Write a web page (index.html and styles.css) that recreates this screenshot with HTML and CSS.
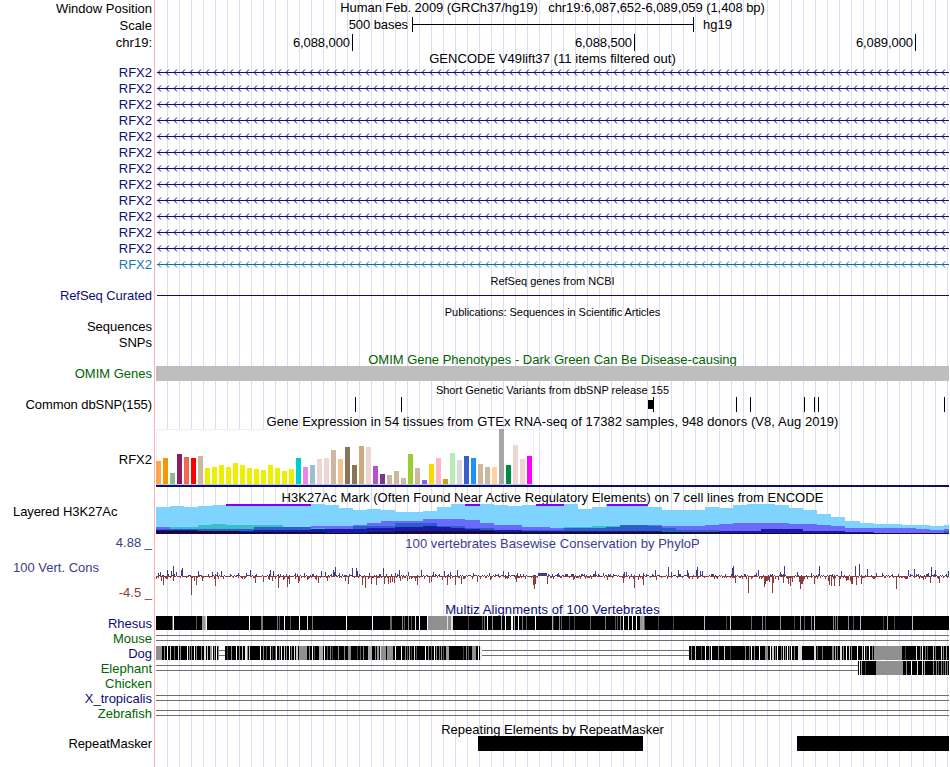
FILE: index.html
```html
<!DOCTYPE html>
<html lang="en">
<head>
    <meta charset="UTF-8">
    <title>chr19:6,087,652-6,089,059</title>
    <link rel="stylesheet" href="styles.css">
</head>
<body>
<div class="browser" id="browser">
    <div class="row head position"><div class="label">Window Position</div><div class="title">Human Feb. 2009 (GRCh37/hg19) &nbsp; chr19:6,087,652-6,089,059 (1,408 bp)</div></div>
    <div class="row head"><div class="label">Scale</div><div class="scale"><span class="bases">500 bases</span><i class="ruler"></i><span>hg19</span></div></div>
    <div class="row head"><div class="label">chr19:</div><div class="ticks"><span>6,088,000</span><span>6,088,500</span><span>6,089,000</span></div></div>
    <div class="row name gencode"><div class="title">GENCODE V49lift37 (11 items filtered out)</div></div>
    <div id="genes"></div>

    <div class="row name small refseq"><div class="title">RefSeq genes from NCBI</div></div>
    <div class="row item navy"><div class="label tight">RefSeq Curated</div><svg class="plot" id="refseq" height="16"></svg></div>
    <div class="row name small pubs"><div class="title">Publications: Sequences in Scientific Articles</div></div>
    <div class="row item"><div class="label">Sequences</div></div>
    <div class="row item"><div class="label">SNPs</div></div>
    <div class="row name green omim"><div class="title">OMIM Gene Phenotypes - Dark Green Can Be Disease-causing</div></div>
    <div class="row thin green"><div class="label">OMIM Genes</div><svg class="plot" id="omim" height="15"></svg></div>
    <div class="row name small snp"><div class="title">Short Genetic Variants from dbSNP release 155</div></div>
    <div class="row thin"><div class="label tight">Common dbSNP(155)</div><svg class="plot" id="dbsnp" height="15"></svg></div>

    <div class="row name gtex"><div class="title">Gene Expression in 54 tissues from GTEx RNA-seq of 17382 samples, 948 donors (V8, Aug 2019)</div></div>
    <div class="row expression"><div class="label">RFX2</div><svg class="plot" id="gtex" height="59"></svg></div>
    <div class="row name h3k"><div class="title">H3K27Ac Mark (Often Found Near Active Regulatory Elements) on 7 cell lines from ENCODE</div></div>
    <div class="row histone"><div class="label left tight">Layered H3K27Ac</div><svg class="plot" id="histone" height="30"></svg></div>
    <div class="row name blue phylop"><div class="title">100 vertebrates Basewise Conservation by PhyloP</div></div>
    <div class="row cons">
        <div class="label limits"><span class="blue">4.88 _</span><span class="blue left">100 Vert. Cons</span><span class="red">-4.5 _</span></div>
        <svg class="plot" id="phylop" height="50"></svg>
    </div>

    <div class="row name navy multiz"><div class="title">Multiz Alignments of 100 Vertebrates</div></div>
    <div class="row thin navy"><div class="label">Rhesus</div><svg class="plot" id="rhesus" height="15"></svg></div>
    <div class="row thin green"><div class="label">Mouse</div><svg class="plot" id="mouse" height="15"></svg></div>
    <div class="row thin navy"><div class="label">Dog</div><svg class="plot" id="dog" height="15"></svg></div>
    <div class="row thin green"><div class="label">Elephant</div><svg class="plot" id="elephant" height="15"></svg></div>
    <div class="row thin green"><div class="label">Chicken</div></div>
    <div class="row thin navy"><div class="label">X_tropicalis</div><svg class="plot" id="xtrop" height="15"></svg></div>
    <div class="row thin green"><div class="label">Zebrafish</div><svg class="plot" id="zebrafish" height="15"></svg></div>
    <div class="row name repeats"><div class="title">Repeating Elements by RepeatMasker</div></div>
    <div class="row thin"><div class="label tight">RepeatMasker</div><svg class="plot" id="repeats" height="15"></svg></div>
</div>
<script src="tracks.js"></script>
</body>
</html>
```
FILE: styles.css
```css
body { margin: 0; background: #fff; color: #000; font-family: "Liberation Sans", Arial, sans-serif; font-size: 13px; overflow: hidden; }

.browser {
    width: 949px;
    height: 767px;
    background:
        linear-gradient(#ffb4b4, #ffb4b4) 154px 0 / 1px 100% no-repeat,
        repeating-linear-gradient(to right, #dcdcf8 0 1px, transparent 1px 12px) 167px 0 / 782px 100% no-repeat;
}

.row { display: flex; height: 16px; line-height: 16px; white-space: pre; }
.label { width: 152px; margin-right: 4px; flex: none; text-align: right; }
.label.left { text-align: left; padding-left: 13px; width: 139px; }
.label.tight { letter-spacing: -0.08px; }
.title { width: 793px; text-align: center; line-height: 15px; }
.name { padding-left: 156px; }
.plot { display: block; width: 793px; flex: none; shape-rendering: crispEdges; }
.item { line-height: 18px; }

.head { height: 17px; line-height: 17px; }
.position .title { letter-spacing: -0.07px; }
.gencode { height: 13px; letter-spacing: 0.05px; }
.thin { height: 15px; line-height: 15px; }
.small { font-size: 11px; height: 15px; }
.refseq .title, .pubs .title { line-height: 18px; }
.pubs { letter-spacing: -0.05px; }
.omim .title { line-height: 19px; }
.snp { height: 16px; }
.snp .title { line-height: 19px; }
.gtex { height: 17px; }
.gtex, .h3k, .phylop { letter-spacing: 0.05px; }
.gtex .title, .h3k .title, .phylop .title { line-height: 19px; }
.phylop { height: 17px; }
.multiz, .repeats { height: 15px; }
.multiz { letter-spacing: 0.1px; }
.multiz .title, .repeats .title { line-height: 17px; }

.navy { color: #0c0c78; }
.blue { color: #3c3c8c; }
.green { color: #006400; }
.red { color: #8c3c3c; }
.alt { color: #1a78b4; }

.scale { display: flex; width: 793px; line-height: 15px; }
.bases { width: 252px; text-align: right; margin-right: 4px; letter-spacing: -0.08px; }
.ruler { width: 280px; height: 15px; margin: 0 9px 0 0; border: solid #000; border-width: 0 1px; background: linear-gradient(#000, #000) 0 7px / 100% 1px no-repeat; }
.ticks { display: grid; grid-template-columns: 197px 282px 281px; height: 15px; }
.ticks span { border-right: 1px solid #000; padding-right: 2px; text-align: right; letter-spacing: -0.08px; }

.expression { height: 59px; line-height: 61px; }
.histone { height: 30px; line-height: 15px; }
.cons { height: 50px; }
.limits { display: flex; flex-direction: column; justify-content: space-between; height: 66px; margin-top: -16px; }
.limits .left { text-align: left; padding-left: 13px; }
```
FILE: tracks.js
```javascript
const LEFT = 156, WIDTH = 793;

function draw(id, shapes) {
    document.getElementById(id).innerHTML = shapes.join('');
}

function rect(x, y, w, h, fill) {
    return `<rect x="${x}" y="${y}" width="${w}" height="${h}" fill="${fill}"/>`;
}

// transcripts, reverse strand
function transcript(color) {
    let d = '';
    for (let x = 1; x < WIDTH - 3; x += 8) d += `M${x + 4} 5.5L${x + 1} 8.5L${x + 4} 11.5`;
    return rect(1, 8, WIDTH - 1, 1, color) + `<path d="${d}" fill="none" stroke="${color}" stroke-width="1" shape-rendering="auto"/>`;
}
let genes = '';
for (let i = 0; i < 13; i++) {
    const last = i === 12;
    genes += `<div class="row item ${last ? 'alt' : 'navy'}"><div class="label">RFX2</div><svg class="plot" height="16">${transcript(last ? '#0c6eb4' : '#0c0c78')}</svg></div>`;
}
document.getElementById('genes').innerHTML = genes;

draw('refseq', [rect(1, 8, 792, 1, '#0c0c78')]);
draw('omim', [rect(0, 0, WIDTH, 15, '#bebebe')]);
draw('dbsnp', [355, 401, 653, 736, 750, 804, 814, 818, 944].map(x => rect(x - LEFT, 0, 1, 15, '#000')).concat(rect(492, 3, 6, 9, '#000')));
draw('repeats', [rect(322, 0, 165, 15, '#000'), rect(641, 0, 152, 15, '#000')]);

// GTEx medians, one bar per tissue
const tissues = [
    [23, '#ffa54f'], [26, '#ee9a00'], [11, '#8fbc8f'], [30, '#8b1c62'], [27, '#ee6a50'], [26, '#ff0000'], [28, '#cdb79e'],
    [16, '#eeee00'], [17, '#eeee00'], [19, '#eeee00'], [17, '#eeee00'], [21, '#eeee00'], [19, '#eeee00'], [16, '#eeee00'],
    [15, '#eeee00'], [14, '#eeee00'], [19, '#eeee00'], [16, '#eeee00'], [13, '#eeee00'], [15, '#eeee00'], [26, '#00cdcd'],
    [17, '#ee82ee'], [19, '#9ac0cd'], [25, '#eed5d2'], [26, '#eed5d2'], [34, '#cdb79e'], [25, '#eec591'], [37, '#8b7355'],
    [19, '#8b7355'], [38, '#cdaa7d'], [37, '#eed5d2'], [18, '#b452cd'], [10, '#7a378b'], [9, '#cdb79e'], [13, '#cdb79e'],
    [6, '#cdb79e'], [30, '#9acd32'], [16, '#cdb79e'], [4, '#7a67ee'], [20, '#ffd700'], [26, '#ffb6c1'], [5, '#cd9b1d'],
    [31, '#b4eeb4'], [24, '#d9d9d9'], [28, '#3a5fcd'], [26, '#1e90ff'], [20, '#cdb79e'], [17, '#cdb79e'], [17, '#ffd39b'],
    [55, '#a6a6a6'], [19, '#008b45'], [39, '#eed5d2'], [25, '#eed5d2'], [28, '#ff00ff']
];
draw('gtex', [rect(0, 0, 378, 56, '#eee'), rect(1, 1, 376, 54, '#fff'), rect(0, 55, 378, 1, '#ccc')]
    .concat(tissues.map(([h, c], i) => rect(i * 7, 55 - h, 5, h, c)), rect(0, 56, WIDTH, 2, '#0c0c78')));

// stepped signal layers: [start x, top y], each running to the next start
function layer(color, steps) {
    return steps.map(([x, y], i) => {
        const end = i + 1 < steps.length ? steps[i + 1][0] : 949;
        return rect(x - LEFT, y - 504, end - x, 534 - y, color);
    }).join('');
}
draw('histone', [
    layer('#7fd3ff', [[156,507],[170,506],[184,507],[198,506],[212,505],[226,504],[325,505],[339,508],[353,510],[367,509],[381,510],[395,512],[423,511],[437,507],[451,504],[494,505],[508,506],[522,505],[536,504],[578,509],[592,507],[606,504],[648,507],[662,510],[705,507],[719,508],[733,505],[747,504],[775,505],[789,508],[803,510],[817,514],[831,517],[845,521],[860,523],[874,524],[902,525],[930,526],[944,525]]),
    layer('#6a6aff', [[156,527],[226,528],[311,526],[353,525],[367,523],[381,521],[423,519],[465,520],[480,523],[494,525],[522,527],[550,528],[606,526],[648,525],[662,526],[705,525],[719,524],[733,523],[789,524],[817,525],[831,526],[845,528],[916,529],[930,530],[944,529]]),
    layer('#3cbec8', [[156,529],[170,527],[198,525],[212,524],[226,525],[283,528],[325,534],[564,527],[592,526],[634,534]]),
    layer('#2d5fc8', [[156,529],[254,527],[311,529],[353,526],[395,523],[437,526],[465,528],[494,530],[564,528],[606,527],[620,525],[648,526],[662,528],[676,530],[719,534],[944,531]]),
    layer('#1a1aaa', [[156,530],[198,531],[254,530],[311,529],[367,528],[395,527],[423,526],[437,527],[451,528],[465,529],[480,530],[522,531],[662,532],[719,531],[761,529],[803,531],[845,532],[874,533]]),
    layer('#1a0a3c', [[156,531],[240,532],[325,533],[367,532],[395,531],[423,531],[494,532],[522,532],[720,533]]),
    rect(70, 0, 85, 2, '#8000ff'), rect(309, 0, 15, 2, '#8000ff'), rect(380, 0, 28, 2, '#8000ff'), rect(451, 0, 41, 2, '#8000ff')
]);

// PhyloP scores in pixels from the zero line; low-scoring bases get a small filler value
const above = {158:3,160:4,167:6,171:5,173:10,176:4,181:6,182:8,198:5,208:2,212:4,217:4,221:5,238:3,246:3,250:6,270:6,273:5,280:2,295:3,304:3,312:2,321:5,325:4,333:6,334:4,335:9,339:3,342:2,352:8,356:8,357:5,369:3,379:2,383:8,395:3,399:6,408:4,421:6,433:4,444:5,450:4,457:6,473:3,489:3,503:5,508:4,517:3,538:3,539:3,540:3,541:3,542:3,543:3,544:3,545:3,546:3,558:3,566:2,582:2,595:5,603:3,624:4,626:4,643:3,655:6,668:9,671:4,678:6,687:6,688:3,696:6,697:9,700:5,702:5,732:8,733:10,756:3,758:6,780:4,784:10,797:4,811:3,819:10,841:5,855:10,859:12,867:7,876:3,882:3,908:6,914:7,928:3,931:9,935:6,948:5};
const below = {161:5,163:9,167:3,173:5,191:19,194:5,196:9,202:5,215:10,218:3,255:7,263:6,269:4,272:5,278:12,283:4,287:11,289:8,298:7,299:5,307:4,316:4,318:7,327:5,345:5,348:8,362:9,365:12,371:8,376:9,384:8,388:8,390:7,392:6,394:7,400:5,407:5,415:5,417:9,429:7,431:6,442:4,447:9,455:9,461:8,477:6,490:4,505:3,516:6,533:9,534:13,535:8,547:8,573:4,607:4,623:7,634:12,638:4,643:9,656:4,735:7,748:17,764:11,765:8,766:5,767:5,768:4,769:6,772:17,773:7,778:4,783:7,788:8,790:10,792:6,799:6,800:13,801:8,802:8,803:5,814:8,828:5,829:9,831:10,834:10,839:10,846:5,847:4,848:4,850:5,851:8,852:8,856:9,861:8,896:13,923:4,930:7,939:7};
const bars = [];
for (let x = LEFT; x < 949; x++) {
    const n = (x * 7919 + (x * x) % 97) % 11;
    const up = above[x] || (n < 3 ? 1 : n === 3 ? 2 : 0);
    const down = below[x] || (n > 8 ? 2 : n === 7 ? 3 : n > 1 ? 1 : 0);
    const conserved = x > 537 && x < 547;
    if (up) bars.push(rect(x - LEFT, 25 - up, 1, up, '#3c3c8c'));
    if (down && !conserved) bars.push(rect(x - LEFT, 25, 1, down, '#8c3c3c'));
}
draw('phylop', bars);

// alignments: black blocks with stripes [x, width, color], gaps as a double line
const gap = (from, to) => rect(from - LEFT, 4, to - from, 1, '#6e6e6e') + rect(from - LEFT, 9, to - from, 1, '#6e6e6e');
const block = (from, to) => rect(from - LEFT, 0, to - from, 14, '#000');
const stripes = list => list.map(([x, w, c]) => rect(x - LEFT, 0, w, 14, c)).join('');

draw('rhesus', [block(156, 949), stripes([
    [172,1,'#666'],[173,1,'#fff'],[196,1,'#555'],[202,3,'#999'],[205,1,'#bbb'],[206,1,'#fff'],[249,1,'#fff'],[261,2,'#777'],[277,1,'#777'],[279,1,'#555'],[284,1,'#fff'],[290,1,'#555'],[299,1,'#fff'],[307,1,'#ddd'],[312,1,'#777'],[346,1,'#fff'],[372,1,'#fff'],[390,2,'#666'],[402,1,'#888'],[404,1,'#555'],[408,1,'#888'],[411,1,'#555'],[415,1,'#ddd'],[419,1,'#fff'],[427,1,'#fff'],[428,19,'#909090'],[447,1,'#ddd'],[448,3,'#909090'],[451,2,'#ddd'],[468,1,'#444'],[482,1,'#555'],[484,1,'#777'],[487,1,'#fff'],[492,1,'#888'],[501,1,'#aaa'],[505,1,'#fff'],[511,2,'#fff'],[514,1,'#aaa'],[518,1,'#fff'],[522,1,'#777'],[526,1,'#555'],[535,1,'#fff'],
    [552,1,'#aaa'],[553,1,'#333'],[559,1,'#888'],[561,1,'#555'],[569,1,'#444'],[574,1,'#444'],[590,1,'#666'],[605,1,'#777'],[615,1,'#555'],[617,1,'#555'],[620,1,'#888'],[623,1,'#fff'],[628,1,'#ddd'],[632,1,'#fff'],[636,1,'#fff'],[640,3,'#999'],[643,1,'#aaa'],[644,1,'#555'],[658,1,'#444'],[673,1,'#444'],[704,1,'#bbb'],[726,1,'#444'],[730,1,'#ccc'],[751,1,'#666'],[762,1,'#888'],[765,1,'#555'],[780,1,'#888'],[794,1,'#444'],[800,1,'#aaa'],[804,1,'#555'],[811,1,'#888'],[814,1,'#ccc'],[833,1,'#888'],[835,1,'#777'],[837,1,'#777'],[848,1,'#888'],[853,1,'#555'],[860,1,'#bbb'],[883,1,'#444'],[887,1,'#aaa'],[894,1,'#444'],[912,1,'#bbb']
])]);
draw('mouse', [gap(156, 949)]);
draw('xtrop', [gap(156, 949)]);
draw('zebrafish', [gap(156, 949)]);

draw('dog', [gap(219, 225), gap(482, 689), block(156, 219), block(225, 480), block(689, 949), stripes([
    [156,6,'#909090'],[164,1,'#888'],[167,1,'#fff'],[170,1,'#ccc'],[174,1,'#666'],[178,1,'#ddd'],[180,1,'#888'],[187,1,'#fff'],[189,1,'#888'],[191,1,'#777'],[194,1,'#fff'],[196,1,'#888'],[201,1,'#888'],[204,2,'#ddd'],[207,1,'#ccc'],[210,2,'#999'],[212,1,'#fff'],[214,1,'#999'],[216,1,'#fff'],[218,1,'#888'],
    [227,1,'#444'],[231,1,'#888'],[236,1,'#fff'],[239,1,'#888'],[242,1,'#ccc'],[245,2,'#eee'],[247,1,'#888'],[249,1,'#ccc'],[260,1,'#fff'],[263,1,'#888'],[266,1,'#555'],[270,1,'#ddd'],[272,1,'#444'],[275,1,'#555'],[276,1,'#fff'],[279,1,'#888'],[281,1,'#fff'],[284,1,'#ccc'],[286,1,'#888'],[289,1,'#fff'],[291,1,'#888'],[294,1,'#ddd'],[296,2,'#ccc'],
    [299,8,'#909090'],[309,1,'#888'],[312,1,'#fff'],[314,1,'#555'],[319,4,'#aaa'],[324,1,'#fff'],[327,1,'#555'],[330,1,'#888'],[332,1,'#444'],[338,1,'#888'],[344,1,'#888'],[348,3,'#888'],[357,1,'#444'],[360,1,'#555'],[363,1,'#888'],[368,4,'#aaa'],[375,1,'#888'],[377,2,'#999'],[380,1,'#ddd'],[381,5,'#909090'],[387,6,'#909090'],[395,1,'#fff'],[401,1,'#fff'],[405,1,'#888'],[407,1,'#555'],[409,1,'#aaa'],[411,1,'#444'],[414,1,'#ddd'],[416,1,'#555'],[425,1,'#fff'],[428,1,'#888'],[431,1,'#555'],[434,1,'#fff'],[436,1,'#888'],[439,1,'#777'],[441,1,'#888'],[443,1,'#555'],[446,3,'#999'],[463,1,'#444'],[466,1,'#888'],[468,1,'#555'],[472,4,'#909090'],[478,1,'#fff'],[480,2,'#eee'],
    [691,1,'#888'],[695,1,'#ccc'],[701,1,'#555'],[705,1,'#fff'],[709,1,'#888'],[711,1,'#fff'],[718,1,'#888'],[724,1,'#ccc'],[730,1,'#444'],[745,1,'#888'],[749,1,'#777'],[751,1,'#fff'],[754,1,'#888'],[759,1,'#fff'],[765,3,'#888'],[770,1,'#fff'],[772,2,'#ccc'],[775,1,'#888'],[777,1,'#fff'],[781,1,'#777'],[783,1,'#ddd'],[785,1,'#888'],[787,1,'#fff'],[789,1,'#888'],[791,1,'#fff'],[794,1,'#888'],[798,4,'#ddd'],[814,2,'#ddd'],[817,1,'#555'],[822,1,'#777'],[832,2,'#888'],[835,1,'#aaa'],[837,1,'#777'],[840,2,'#ddd'],[843,1,'#888'],[846,1,'#fff'],[849,1,'#ddd'],[851,1,'#888'],[857,1,'#fff'],[862,1,'#ccc'],[864,1,'#fff'],[866,1,'#555'],[869,1,'#fff'],[872,1,'#888'],
    [874,28,'#909090'],[905,1,'#444'],[916,1,'#ddd'],[920,1,'#888'],[922,1,'#fff'],[925,1,'#777'],[927,1,'#555'],[933,1,'#ccc'],[935,1,'#777'],[941,1,'#ddd'],[943,1,'#888'],[946,1,'#aaa']
])]);
draw('elephant', [gap(156, 858), block(858, 949), stripes([[859,1,'#fff'],[861,1,'#aaa'],[865,1,'#444'],[876,27,'#909090'],[906,1,'#888'],[911,1,'#fff'],[917,1,'#ddd'],[922,1,'#ddd'],[924,1,'#aaa'],[933,1,'#888'],[936,1,'#888'],[938,1,'#555'],[941,1,'#888'],[943,1,'#555'],[945,1,'#888'],[947,1,'#777']])]);
```
